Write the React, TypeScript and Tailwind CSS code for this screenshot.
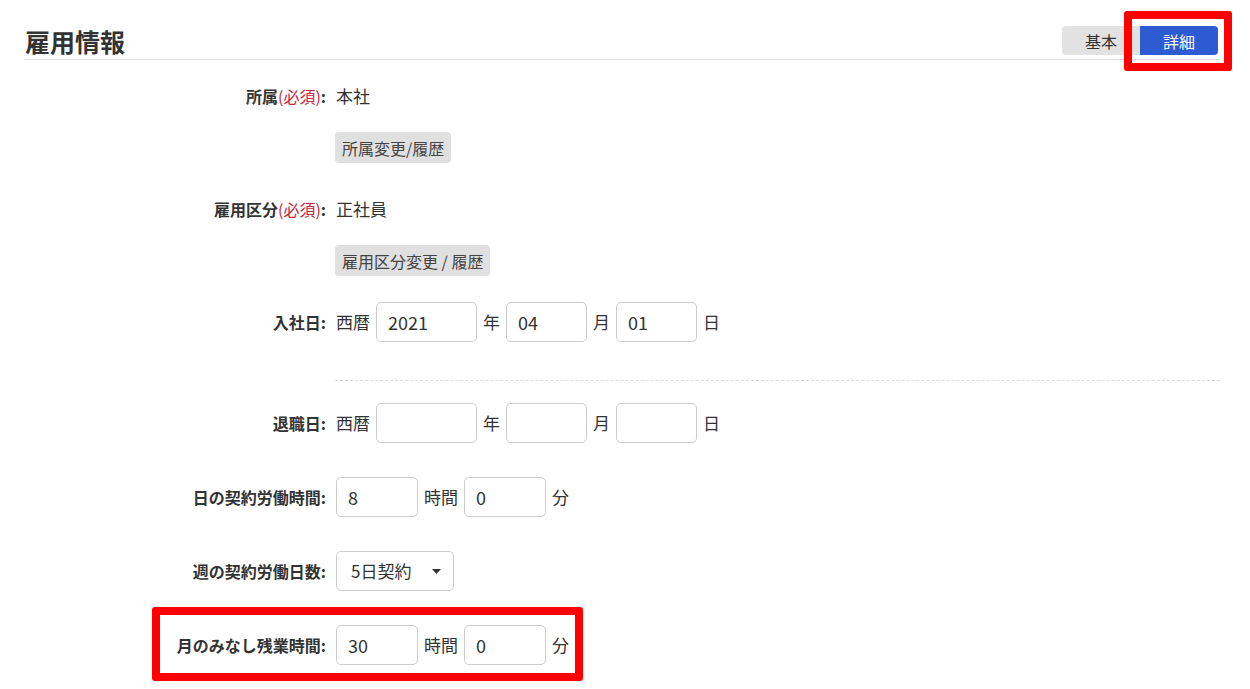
import type { ReactNode } from "react";

const font = { fontFamily: '"Noto Sans CJK JP", "Noto Sans", sans-serif' };

const Label = ({ children }: { children: ReactNode }) => (
  <div className="w-[302px] shrink-0 text-right text-[16px] font-bold leading-[24px] text-[#333]">
    {children}
  </div>
);

const Required = () => (
  <span className="font-normal text-[#c8283e]">(必須)</span>
);

const Field = ({ value = "", width }: { value?: string; width: string }) => (
  <div
    className={`${width} flex h-[40px] items-center rounded-[5px] border border-[#ccc] bg-white px-[11px] text-[18px] text-[#333]`}
  >
    {value}
  </div>
);

const Unit = ({ children }: { children: ReactNode }) => (
  <span className="text-[17px] leading-[24px] text-[#333]">{children}</span>
);

const GrayButton = ({ children }: { children: ReactNode }) => (
  <div className="ml-[311px] inline-flex h-[31px] items-center rounded-[4px] bg-[#e0e0e0] px-[7px] text-[16px] text-[#444]">
    {children}
  </div>
);

const DateRow = ({
  label,
  y = "",
  m = "",
  d = "",
  className = "",
}: {
  label: string;
  y?: string;
  m?: string;
  d?: string;
  className?: string;
}) => (
  <div className={`flex items-center ${className}`}>
    <Label>{label}:</Label>
    <div className="ml-[10px] flex items-center gap-[6px]">
      <Unit>西暦</Unit>
      <Field value={y} width="w-[101px]" />
      <Unit>年</Unit>
      <Field value={m} width="w-[81px]" />
      <Unit>月</Unit>
      <Field value={d} width="w-[81px]" />
      <Unit>日</Unit>
    </div>
  </div>
);

const TimeRow = ({
  label,
  h,
  min,
  className = "",
  children,
}: {
  label: string;
  h: string;
  min: string;
  className?: string;
  children?: ReactNode;
}) => (
  <div className={`relative flex items-center ${className}`}>
    {children}
    <Label>{label}:</Label>
    <div className="ml-[10px] flex items-center gap-[6px]">
      <Field value={h} width="w-[82px]" />
      <Unit>時間</Unit>
      <Field value={min} width="w-[82px]" />
      <Unit>分</Unit>
    </div>
  </div>
);

export default function App() {
  return (
    <div className="min-h-[689px] bg-white pl-[24px] pr-[30px] pt-[22px]" style={font}>
      {/* header */}
      <div className="flex h-[38px] items-center justify-between border-b border-[#ddd]">
        <h2 className="pl-[1px] text-[25px] font-bold leading-[32px] text-[#333]">雇用情報</h2>
        <div className="mr-[2px] flex h-[29px] text-[16px]">
          <div className="flex w-[78px] items-center justify-center rounded-l-[4px] bg-[#e2e2e2] text-[#333]">
            基本
          </div>
          <div className="relative flex w-[78px] items-center justify-center rounded-r-[4px] bg-[#2c5bd2] text-white">
            詳細
            <div className="absolute left-[-16px] top-[-15px] h-[60px] w-[108px] rounded-[3px] border-[8px] border-[#f00]" />
          </div>
        </div>
      </div>

      {/* 所属 */}
      <div className="mt-[24px] flex items-center">
        <Label>
          所属
          <Required />:
        </Label>
        <span className="ml-[10px] text-[17px] leading-[24px] text-[#333]">本社</span>
      </div>
      <div className="mt-[24px]">
        <GrayButton>所属変更/履歴</GrayButton>
      </div>

      {/* 雇用区分 */}
      <div className="mt-[34px] flex items-center">
        <Label>
          雇用区分
          <Required />:
        </Label>
        <span className="ml-[10px] text-[17px] leading-[24px] text-[#333]">正社員</span>
      </div>
      <div className="mt-[24px]">
        <GrayButton>雇用区分変更 / 履歴</GrayButton>
      </div>

      <DateRow label="入社日" y="2021" m="04" d="01" className="mt-[26px]" />

      <div className="ml-[311px] mt-[38px] border-t border-dashed border-[#ddd]" />

      <DateRow label="退職日" className="mt-[22px]" />

      <TimeRow label="日の契約労働時間" h="8" min="0" className="mt-[34px]" />

      {/* 週の契約労働日数 */}
      <div className="mt-[34px] flex items-center">
        <Label>週の契約労働日数:</Label>
        <div className="ml-[10px] flex h-[40px] w-[118px] items-center justify-between rounded-[5px] border border-[#ccc] pl-[14px] pr-[12px] text-[17px] text-[#333]">
          <span>5日契約</span>
          <svg width="9" height="5" viewBox="0 0 9 5">
            <polygon points="0,0 9,0 4.5,5" fill="#333" />
          </svg>
        </div>
      </div>

      <TimeRow label="月のみなし残業時間" h="30" min="0" className="mt-[34px]">
        <div className="absolute left-[128px] top-[-18px] h-[74px] w-[431px] rounded-[3px] border-[8px] border-[#f00]" />
      </TimeRow>
    </div>
  );
}
